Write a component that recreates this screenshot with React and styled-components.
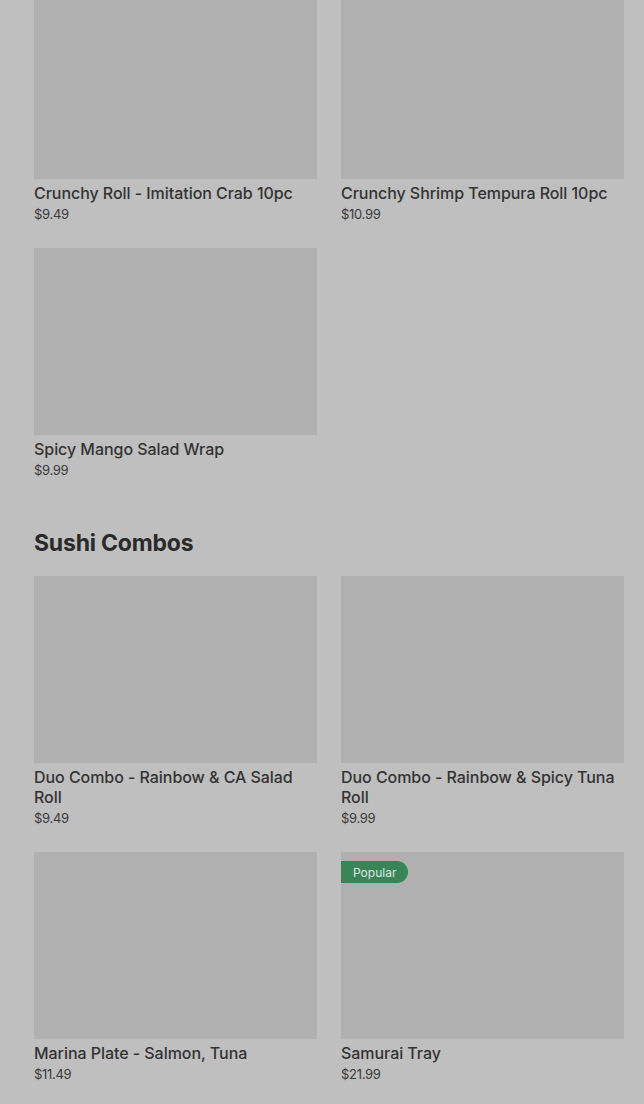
import React from 'react';
import styled, { createGlobalStyle } from 'styled-components';

const GlobalStyle = createGlobalStyle`
  body {
    margin: 0;
    background: #bfbfbf;
    font-family: Inter, "Liberation Sans", sans-serif;
    color: #2d2d2d;
  }
`;

const sections = [
  {
    id: 'rolls',
    items: [
      { id: 1, title: 'Crunchy Roll - Imitation Crab 10pc', price: '$9.49' },
      { id: 2, title: 'Crunchy Shrimp Tempura Roll 10pc', price: '$10.99' },
      { id: 3, title: 'Spicy Mango Salad Wrap', price: '$9.99' },
    ],
  },
  {
    id: 'combos',
    title: 'Sushi Combos',
    items: [
      { id: 4, title: 'Duo Combo - Rainbow & CA Salad Roll', price: '$9.49' },
      { id: 5, title: 'Duo Combo - Rainbow & Spicy Tuna Roll', price: '$9.99' },
      { id: 6, title: 'Marina Plate - Salmon, Tuna', price: '$11.49' },
      { id: 7, title: 'Samurai Tray', price: '$21.99', badge: 'Popular' },
    ],
  },
];

const App = () => (
  <>
    <GlobalStyle />
    <Page>
      {sections.map((section) => (
        <Section key={section.id}>
          {section.title && <SectionTitle>{section.title}</SectionTitle>}
          <Grid>
            {section.items.map((item) => (
              <Card key={item.id}>
                <ImageBox>
                  {item.badge && <Badge>{item.badge}</Badge>}
                </ImageBox>
                <ItemTitle>{item.title}</ItemTitle>
                <Price>{item.price}</Price>
              </Card>
            ))}
          </Grid>
        </Section>
      ))}
    </Page>
  </>
);

const Page = styled.div`
  margin-top: -8px;
  padding: 0 20px 0 34px;
`;

const Section = styled.section`
  & + & {
    margin-top: 49px;
  }
`;

const SectionTitle = styled.h2`
  margin: 0 0 19px;
  font-size: 23px;
  line-height: 28px;
  font-weight: 700;
  letter-spacing: -0.2px;
  color: #2a2a2a;
`;

const Grid = styled.div`
  display: grid;
  grid-template-columns: repeat(2, 1fr);
  column-gap: 24px;
  row-gap: 24px;
`;

const Card = styled.div`
  display: flex;
  flex-direction: column;
`;

const ImageBox = styled.div`
  position: relative;
  height: 187px;
  background: #b0b0b0;
  margin-bottom: 4px;
`;

const Badge = styled.span`
  position: absolute;
  top: 9px;
  left: 0;
  height: 22px;
  padding: 0 12px;
  display: flex;
  align-items: center;
  background: #3a8558;
  color: #dfe6e1;
  font-size: 12px;
  border-radius: 0 11px 11px 0;
`;

const ItemTitle = styled.div`
  font-size: 16px;
  line-height: 20px;
  font-weight: 500;
  letter-spacing: -0.05px;
  color: #333333;
`;

const Price = styled.div`
  margin-top: 1px;
  font-size: 13px;
  line-height: 20px;
  color: #3a3a3a;
  letter-spacing: -0.3px;
`;

export default App;
